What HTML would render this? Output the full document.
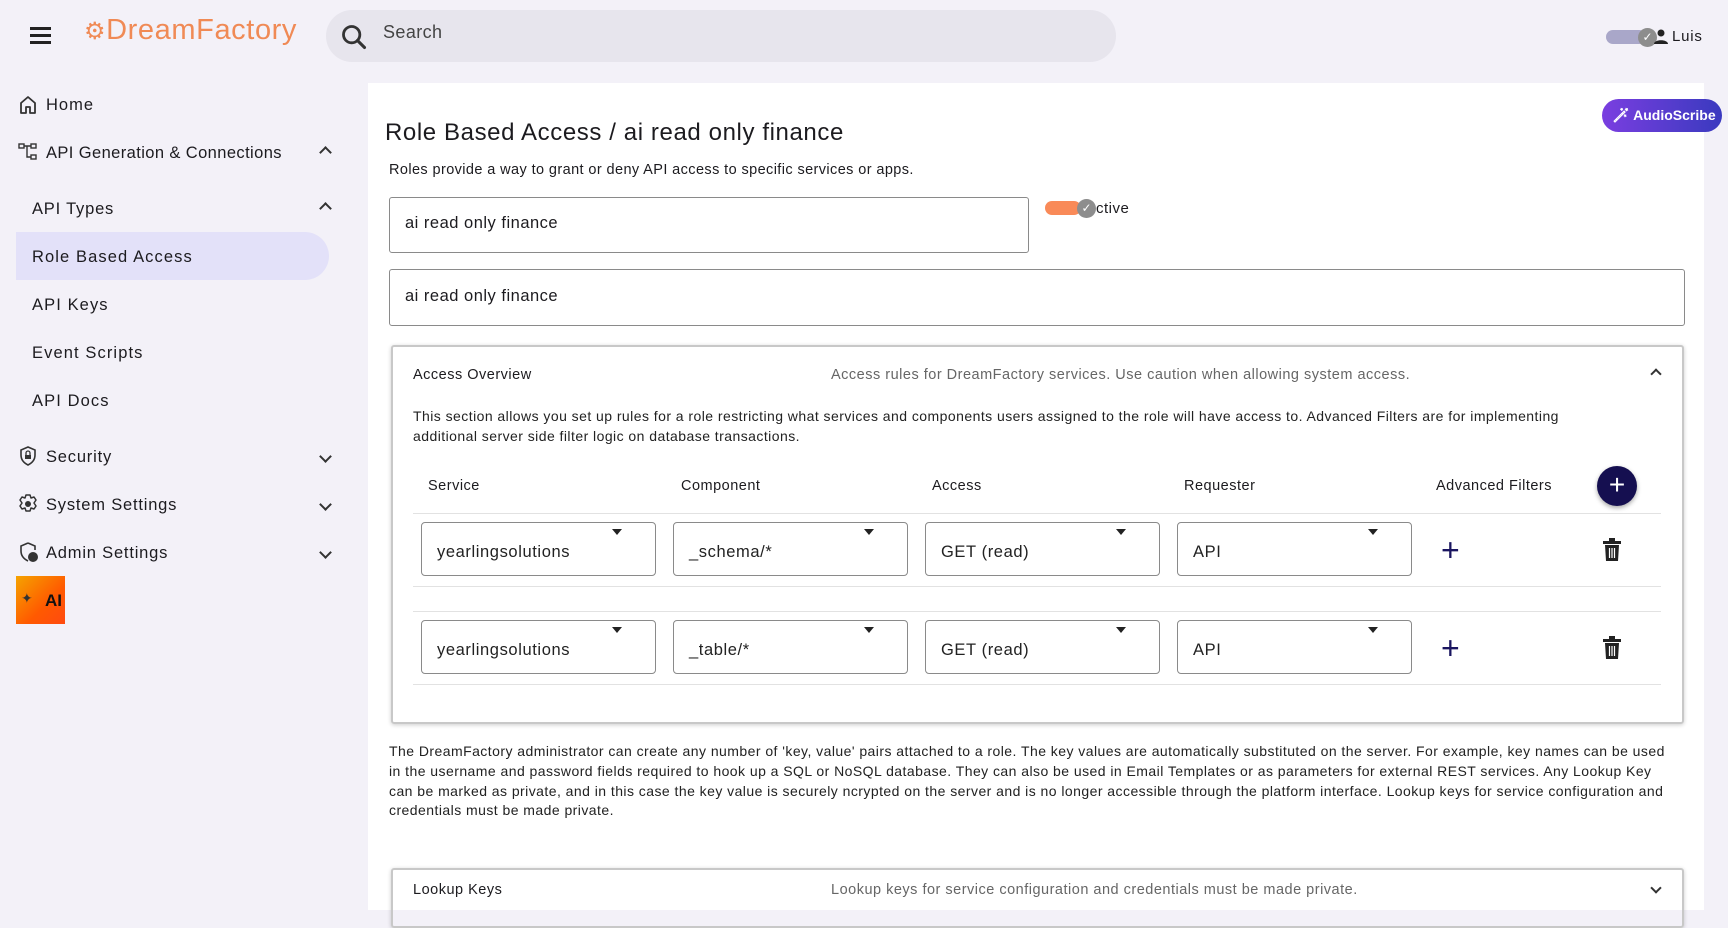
<!DOCTYPE html>
<html><head><meta charset="utf-8"><style>
*{box-sizing:border-box;margin:0;padding:0}
body{width:1728px;height:910px;overflow:hidden;background:#f3f1f8;font-family:"Liberation Sans",sans-serif;color:#1c1b1f;position:relative}
.a{position:absolute;white-space:nowrap}
.nav{font-size:16.5px;letter-spacing:.4px;color:#1c1b1f}
.chev{position:absolute;left:318px;width:9px;height:9px;border-right:2px solid #333;border-bottom:2px solid #333}
.dn{transform:rotate(45deg)}
.up{transform:rotate(-135deg)}
.sel{position:absolute;height:54px;width:235px;border:1px solid #8a8a8a;border-radius:4px;font-size:16.5px;letter-spacing:.6px;padding:20px 0 0 15px;color:#222;background:#fff}
.sel .tri{position:absolute;right:33px;top:6px;width:0;height:0;border-left:5px solid transparent;border-right:5px solid transparent;border-top:6px solid #222}
.hline{position:absolute;left:413px;width:1248px;height:1px;background:#e2e2e2}
.plus{position:absolute;font-size:32px;color:#1a1560;font-weight:300}
.s{font-size:14.5px;letter-spacing:.5px}
p.t{font-size:14px;line-height:19.8px;color:#222;letter-spacing:.45px}
</style></head><body>
<div class="a" style="left:30px;top:27px;width:21px;height:3px;background:#222;box-shadow:0 7px 0 #222,0 14px 0 #222"></div>
<div class="a" style="left:84px;top:14px;font-size:29px;color:#f08a55;letter-spacing:.6px"><span style="font-size:24px">⚙</span>DreamFactory</div>
<div class="a" style="left:326px;top:10px;width:790px;height:52px;border-radius:26px;background:#e7e5ed"></div>
<svg class="a" style="left:340px;top:23px" width="28" height="28" viewBox="0 0 24 24"><circle cx="10" cy="10" r="7" fill="none" stroke="#333" stroke-width="2.4"/><path d="M15 15l6 6" stroke="#333" stroke-width="2.6" stroke-linecap="round"/></svg>
<div class="a" style="left:383px;top:22px;font-size:18px;color:#444;letter-spacing:.4px">Search</div>
<div class="a" style="left:1606px;top:30px;width:40px;height:14px;border-radius:7px;background:#a9a7c9"></div>
<div class="a" style="left:1638px;top:28px;width:19px;height:19px;border-radius:50%;background:#8d8d8d;color:#fff;font-size:12px;text-align:center;line-height:19px">✓</div>
<svg class="a" style="left:1653px;top:28px" width="16" height="16" viewBox="0 0 16 16"><circle cx="8" cy="5" r="3.5" fill="#222"/><path d="M1 16c0-5 14-5 14 0z" fill="#222"/></svg>
<div class="a" style="left:1672px;top:28px;font-size:15px;letter-spacing:.8px">Luis</div>

<svg class="a" style="left:18px;top:95px" width="20" height="20" viewBox="0 0 20 20"><path d="M3 18V8l7-6 7 6v10h-5v-6H8v6z" fill="none" stroke="#333" stroke-width="1.8" stroke-linejoin="round"/></svg>
<div class="a nav" style="left:46px;top:96px;letter-spacing:1px">Home</div>
<svg class="a" style="left:18px;top:143px" width="20" height="18" viewBox="0 0 20 18"><rect x="1" y="1" width="5" height="4" fill="none" stroke="#333" stroke-width="1.4"/><rect x="13" y="1" width="5" height="4" fill="none" stroke="#333" stroke-width="1.4"/><rect x="13" y="12" width="5" height="4" fill="none" stroke="#333" stroke-width="1.4"/><path d="M6 3h7M9 3v11h4" fill="none" stroke="#333" stroke-width="1.4"/></svg>
<div class="a nav" style="left:46px;top:144px">API Generation &amp; Connections</div>
<div class="chev up" style="top:148px;left:321px"></div>
<div class="a nav" style="left:32px;top:200px;letter-spacing:.8px">API Types</div>
<div class="chev up" style="top:204px;left:321px"></div>
<div class="a" style="left:16px;top:232px;width:313px;height:48px;border-radius:0 24px 24px 0;background:#e3e1f9"></div>
<div class="a nav" style="left:32px;top:248px;letter-spacing:1.1px">Role Based Access</div>
<div class="a nav" style="left:32px;top:296px;letter-spacing:1.1px">API Keys</div>
<div class="a nav" style="left:32px;top:344px;letter-spacing:1.1px">Event Scripts</div>
<div class="a nav" style="left:32px;top:392px;letter-spacing:1.1px">API Docs</div>
<svg class="a" style="left:18px;top:446px" width="20" height="20" viewBox="0 0 20 20"><path d="M10 1l7 3v5c0 5-3 8-7 10-4-2-7-5-7-10V4z" fill="none" stroke="#333" stroke-width="1.6"/><rect x="7" y="9" width="6" height="4" fill="#333"/><path d="M8 9V7a2 2 0 014 0v2" fill="none" stroke="#333" stroke-width="1.3"/></svg>
<div class="a nav" style="left:46px;top:448px;letter-spacing:.8px">Security</div>
<div class="chev dn" style="top:452px;left:321px"></div>
<svg class="a" style="left:18px;top:494px" width="20" height="20" viewBox="0 0 20 20"><circle cx="10" cy="10" r="3" fill="#333"/><path d="M8 1h4l1 3 3-1 2 3-2 3 2 3-2 3-3-1-1 3H8l-1-3-3 1-2-3 2-3-2-3 2-3 3 1z" fill="none" stroke="#333" stroke-width="1.5" stroke-linejoin="round"/></svg>
<div class="a nav" style="left:46px;top:496px;letter-spacing:.8px">System Settings</div>
<div class="chev dn" style="top:500px;left:321px"></div>
<svg class="a" style="left:18px;top:542px" width="22" height="22" viewBox="0 0 22 22"><path d="M10 1l7 3v4M10 1L3 4v5c0 5 3 8 7 10" fill="none" stroke="#333" stroke-width="1.6"/><circle cx="15" cy="15" r="5" fill="#333"/></svg>
<div class="a nav" style="left:46px;top:544px;letter-spacing:.8px">Admin Settings</div>
<div class="chev dn" style="top:548px;left:321px"></div>
<div class="a" style="left:16px;top:576px;width:49px;height:48px;background:linear-gradient(135deg,#f5a300,#ff5a00 60%,#ff4a10)"></div>
<div class="a" style="left:21px;top:590px;font-size:14px;color:#333">✦</div>
<div class="a" style="left:45px;top:591px;font-size:17px;font-weight:bold;color:#111">AI</div>

<div class="a" style="left:368px;top:83px;width:1336px;height:827px;background:#fff"></div>
<div class="a" style="left:1602px;top:99px;width:120px;height:33px;border-radius:17px;background:linear-gradient(90deg,#7a3ee0,#3a3abf);color:#fff;font-weight:bold;font-size:14px;line-height:33px;padding-left:10px">🪄︎ AudioScribe</div>
<div class="a" style="left:385px;top:119px;font-size:24px;color:#1c1b1f;letter-spacing:.6px">Role Based Access / ai read only finance</div>
<div class="a s" style="left:389px;top:162px;letter-spacing:.4px">Roles provide a way to grant or deny API access to specific services or apps.</div>
<div class="a" style="left:389px;top:197px;width:640px;height:56px;border:1px solid #8a8a8a;border-radius:3px;font-size:16.5px;letter-spacing:.5px;padding:16px 0 0 15px">ai read only finance</div>
<div class="a" style="left:1045px;top:201px;width:36px;height:14px;border-radius:7px;background:#f98a58"></div>
<div class="a" style="left:1077px;top:199px;width:19px;height:19px;border-radius:50%;background:#8d8d8d;color:#fff;font-size:12px;text-align:center;line-height:19px">✓</div>
<div class="a" style="left:1096px;top:200px;font-size:15px;letter-spacing:.5px">ctive</div>
<div class="a" style="left:389px;top:269px;width:1296px;height:57px;border:1px solid #8a8a8a;border-radius:3px;font-size:16.5px;letter-spacing:.5px;padding:17px 0 0 15px">ai read only finance</div>

<div class="a" style="left:391px;top:345px;width:1293px;height:379px;border:2px solid #c8c8c8;box-shadow:0 1px 4px rgba(0,0,0,.2);border-radius:3px"></div>
<div class="a s" style="left:413px;top:367px">Access Overview</div>
<div class="a s" style="left:831px;top:367px;color:#666">Access rules for DreamFactory services. Use caution when allowing system access.</div>
<div class="chev up" style="left:1652px;top:370px;width:8px;height:8px"></div>
<p class="a t" style="left:413px;top:407px;white-space:normal;width:1190px">This section allows you set up rules for a role restricting what services and components users assigned to the role will have access to. Advanced Filters are for implementing additional server side filter logic on database transactions.</p>
<div class="a s" style="left:428px;top:478px">Service</div>
<div class="a s" style="left:681px;top:478px">Component</div>
<div class="a s" style="left:932px;top:478px">Access</div>
<div class="a s" style="left:1184px;top:478px">Requester</div>
<div class="a s" style="left:1436px;top:478px">Advanced Filters</div>
<div class="a" style="left:1597px;top:466px;width:40px;height:40px;border-radius:50%;background:#150f50;box-shadow:0 2px 5px rgba(0,0,0,.35);color:#fff;font-size:28px;text-align:center;line-height:38px">+</div>
<div class="hline" style="top:513px"></div>
<div class="hline" style="top:586px"></div>
<div class="hline" style="top:611px"></div>
<div class="hline" style="top:684px"></div>

<div class="sel" style="left:421px;top:522px">yearlingsolutions<span class="tri"></span></div>
<div class="sel" style="left:673px;top:522px">_schema/*<span class="tri"></span></div>
<div class="sel" style="left:925px;top:522px">GET (read)<span class="tri"></span></div>
<div class="sel" style="left:1177px;top:522px">API<span class="tri"></span></div>
<div class="plus" style="left:1441px;top:532px">+</div>
<svg class="a" style="left:1602px;top:538px" width="20" height="24" viewBox="0 0 20 24"><rect x="1" y="3" width="18" height="3" fill="#222"/><rect x="7" y="0" width="6" height="3" fill="#222"/><path d="M3 7h14l-1 16H4z" fill="#222"/><path d="M7.5 10v10M10 10v10M12.5 10v10" stroke="#fff" stroke-width="1.2"/></svg>

<div class="sel" style="left:421px;top:620px">yearlingsolutions<span class="tri"></span></div>
<div class="sel" style="left:673px;top:620px">_table/*<span class="tri"></span></div>
<div class="sel" style="left:925px;top:620px">GET (read)<span class="tri"></span></div>
<div class="sel" style="left:1177px;top:620px">API<span class="tri"></span></div>
<div class="plus" style="left:1441px;top:630px">+</div>
<svg class="a" style="left:1602px;top:636px" width="20" height="24" viewBox="0 0 20 24"><rect x="1" y="3" width="18" height="3" fill="#222"/><rect x="7" y="0" width="6" height="3" fill="#222"/><path d="M3 7h14l-1 16H4z" fill="#222"/><path d="M7.5 10v10M10 10v10M12.5 10v10" stroke="#fff" stroke-width="1.2"/></svg>

<p class="a t" style="left:389px;top:742px;white-space:normal;width:1280px">The DreamFactory administrator can create any number of 'key, value' pairs attached to a role. The key values are automatically substituted on the server. For example, key names can be used in the username and password fields required to hook up a SQL or NoSQL database. They can also be used in Email Templates or as parameters for external REST services. Any Lookup Key can be marked as private, and in this case the key value is securely ncrypted on the server and is no longer accessible through the platform interface. Lookup keys for service configuration and credentials must be made private.</p>

<div class="a" style="left:391px;top:868px;width:1293px;height:60px;border:2px solid #c8c8c8;box-shadow:0 1px 4px rgba(0,0,0,.2);border-radius:3px"></div>
<div class="a s" style="left:413px;top:882px">Lookup Keys</div>
<div class="a s" style="left:831px;top:882px;color:#666">Lookup keys for service configuration and credentials must be made private.</div>
<div class="chev dn" style="left:1652px;top:884px;width:8px;height:8px"></div>
</body></html>
